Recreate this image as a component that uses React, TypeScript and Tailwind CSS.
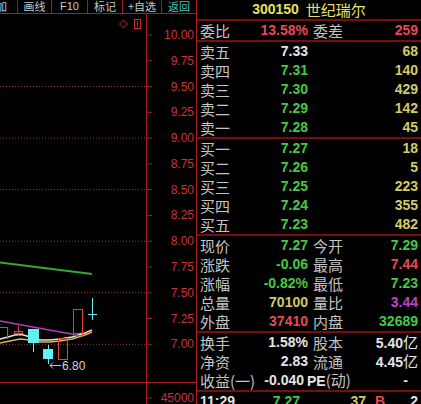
import type { ReactNode } from 'react'

const LBL = "font-['Noto_Sans_CJK_SC',sans-serif] text-[15px] leading-[19px] text-[#c4c4c4]"
const NUM = "font-['Liberation_Sans',sans-serif] text-[14px] leading-[19px] font-bold"
const GREEN = 'text-[#46c846]'
const RED = 'text-[#e8485a]'
const YEL = 'text-[#d0cc66]'
const WHITE = 'text-[#e4e4e4]'
const PURPLE = 'text-[#c040c8]'

const tools = [
  { t: '加', w: 'w-[18px] justify-start overflow-hidden', c: 'text-[#c8c8c8] -ml-[4px]' },
  { t: '画线', w: 'w-[34px] justify-center', c: 'text-[#c8c8c8]' },
  { t: 'F10', w: 'w-[36px] justify-center', c: "text-[#c8c8c8] font-['Liberation_Sans',sans-serif] text-[11px]" },
  { t: '标记', w: 'w-[35px] justify-center', c: 'text-[#c8c8c8]' },
  { t: '+自选', w: 'w-[39px] justify-center', c: 'text-[#c8c8c8]' },
  { t: '返回', w: 'flex-1 justify-center', c: 'text-[#4cc4c4]' },
]

const levels = [10, 9.75, 9.5, 9.25, 9, 8.75, 8.5, 8.25, 8, 7.75, 7.5, 7.25, 7]
const py = (p: number) => 35 + (10 - p) * 103.1

const asks = [
  ['卖五', '7.33', WHITE, '68'],
  ['卖四', '7.31', GREEN, '140'],
  ['卖三', '7.30', GREEN, '429'],
  ['卖二', '7.29', GREEN, '142'],
  ['卖一', '7.28', GREEN, '45'],
]
const bids = [
  ['买一', '7.27', GREEN, '18'],
  ['买二', '7.26', GREEN, '5'],
  ['买三', '7.25', GREEN, '223'],
  ['买四', '7.24', GREEN, '355'],
  ['买五', '7.23', GREEN, '482'],
]

function Row({ a, av, ac, b, bv, bc, extra }: {
  a: ReactNode; av: ReactNode; ac: string; b?: ReactNode; bv: ReactNode; bc: string; extra?: boolean
}) {
  return (
    <div className="grid h-[19px] grid-cols-[108px_105px] items-center gap-x-[5px] overflow-hidden pl-[3px] leading-[19px]">
      <div className="flex h-[19px] items-center justify-between">
        <span className={LBL}>{a}</span>
        <span className={`${NUM} ${ac} ${extra ? 'mr-[4px]' : ''}`}>{av}</span>
      </div>
      <div className="flex h-[19px] items-center justify-between">
        <span className={`${LBL} whitespace-nowrap ${extra ? '-ml-[6px]' : ''}`}>{b}</span>
        <span className={`${NUM} ${bc}`}>{bv}</span>
      </div>
    </div>
  )
}

const Yi = ({ v }: { v: string }) => (
  <>
    {v}
    <span className="font-['Noto_Sans_CJK_SC',sans-serif] text-[15px] font-normal">亿</span>
  </>
)

function Chart() {
  const line = '#b01c1c'
  return (
    <svg className="block" width={196} height={390} viewBox="0 14 196 390">
      {/* grid dots */}
      {[9.5, 9, 8.5, 8, 7.5, 7].map((p) => (
        <line key={p} x1={0} x2={146} y1={py(p)} y2={py(p)} stroke="#9a3c3c" strokeDasharray="1 2" />
      ))}
      <line x1={146.5} x2={146.5} y1={14} y2={404} stroke={line} />
      <line x1={0} x2={196} y1={382.5} y2={382.5} stroke={line} />
      {levels.map((p) => (
        <g key={p}>
          <line x1={147} x2={152} y1={py(p)} y2={py(p)} stroke={line} />
          <text x={194} y={py(p) + 4} textAnchor="end" fontSize={12} fill="#cc3434" fontFamily="Liberation Sans, sans-serif">
            {p.toFixed(2)}
          </text>
        </g>
      ))}
      <line x1={147} x2={152} y1={398} y2={398} stroke={line} />
      <text x={194} y={402} textAnchor="end" fontSize={12} fill="#cc3434" fontFamily="Liberation Sans, sans-serif">45000</text>

      {/* markers top */}
      <polygon points="123.5,20 127.5,24 123.5,28 119.5,24" fill="none" stroke="#d03030" />
      <rect x={134.5} y={19.5} width={6} height={9} fill="none" stroke="#d03030" />
      <line x1={137.5} x2={137.5} y1={21} y2={27} stroke="#d03030" />

      {/* moving averages */}
      <polyline points="0,262.5 92,274" fill="none" stroke="#34a834" strokeWidth={2} />
      <polyline points="0,321 30,326.5 55,331 72,334 82,333.5" fill="none" stroke="#b040b4" strokeWidth={1.5} />
      <polyline points="0,339 8,337 15,335 22,334.5 30,337 40,340 50,340 60,339 72,337 85,333 92,330" fill="none" stroke="#e6e6cc" strokeWidth={1.5} />
      <polyline points="0,343 10,341 20,339 30,340 40,342 50,342 60,341 72,339 85,335 92,332" fill="none" stroke="#d8b45c" strokeWidth={1.5} />
      <line x1={86} y1={333.5} x2={92} y2={331} stroke="#e04040" />

      {/* candles */}
      <line x1={0} x2={7} y1={327.5} y2={327.5} stroke="#e04040" />
      <line x1={7.5} x2={7.5} y1={327} y2={339} stroke="#e04040" />
      <line x1={18.5} x2={18.5} y1={326} y2={336} stroke="#e04040" />
      <rect x={14.5} y={331.5} width={8} height={2} fill="none" stroke="#e04040" />
      <line x1={33.5} x2={33.5} y1={340} y2={352} stroke="#62eef4" />
      <rect x={28} y={329} width={11} height={14} fill="#62eef4" />
      <line x1={48.5} x2={48.5} y1={345} y2={364} stroke="#62eef4" />
      <rect x={43} y={349} width={10} height={10} fill="#62eef4" />
      <rect x={58.5} y={338.5} width={9} height={21} fill="none" stroke="#e04040" />
      <rect x={73.5} y={309.5} width={9} height={26} fill="none" stroke="#e04040" />
      <line x1={92.5} x2={92.5} y1={298} y2={320} stroke="#62eef4" />
      <line x1={88} x2={97} y1={314.5} y2={314.5} stroke="#62eef4" />

      {/* low marker */}
      <path d="M61 365.5 L50 365.5 M50 365.5 l3 -3 M50 365.5 l3 3" fill="none" stroke="#c8c8c8" />
      <text x={62} y={370} fontSize={12} fill="#d4d4d4" fontFamily="Liberation Sans, sans-serif">6.80</text>
    </svg>
  )
}

export default function App() {
  const sep = 'border-b-2 border-[#7a0c0c]'
  return (
    <div className="flex h-[404px] w-[421px] overflow-hidden bg-black">
      {/* 左侧 K 线 */}
      <div className="flex w-[197px] shrink-0 flex-col border-r border-[#b01c1c]">
        <div className="flex h-[14px] shrink-0 border-b border-[#b01c1c] font-['Noto_Sans_CJK_SC',sans-serif] text-[11px] leading-[13px]">
          {tools.map((t, i) => (
            <div
              key={t.t}
              className={`flex items-center ${t.w} ${i < tools.length - 1 ? 'border-r border-[#a01c1c]' : ''}`}
            >
              <span className={`whitespace-nowrap ${t.c}`}>{t.t}</span>
            </div>
          ))}
        </div>
        <Chart />
      </div>

      {/* 右侧 盘口 */}
      <div className="flex flex-1 flex-col">
        <div className={`flex h-[21px] shrink-0 items-center justify-center gap-[7px] text-[#e6e060] ${sep}`}>
          <span className={`${NUM}`}>300150</span>
          <span className="font-['Noto_Sans_CJK_SC',sans-serif] text-[15px] leading-[19px]">世纪瑞尔</span>
        </div>
        <div className={`shrink-0 ${sep}`}>
          <Row a="委比" av="13.58%" ac={RED} b="委差" bv="259" bc={RED} />
        </div>
        <div className={`shrink-0 ${sep}`}>
          {asks.map(([a, p, c, q]) => (
            <Row key={a} a={a} av={p} ac={c} bv={q} bc={YEL} />
          ))}
        </div>
        <div className={`shrink-0 ${sep}`}>
          {bids.map(([a, p, c, q]) => (
            <Row key={a} a={a} av={p} ac={c} bv={q} bc={YEL} />
          ))}
        </div>
        <div className={`shrink-0 ${sep}`}>
          <Row a="现价" av="7.27" ac={GREEN} b="今开" bv="7.29" bc={GREEN} />
          <Row a="涨跌" av="-0.06" ac={GREEN} b="最高" bv="7.44" bc={RED} />
          <Row a="涨幅" av="-0.82%" ac={GREEN} b="最低" bv="7.23" bc={GREEN} />
          <Row a="总量" av="70100" ac={YEL} b="量比" bv="3.44" bc={PURPLE} />
          <Row a="外盘" av="37410" ac={RED} b="内盘" bv="32689" bc={GREEN} />
        </div>
        <div className={`shrink-0 ${sep}`}>
          <Row a="换手" av="1.58%" ac={WHITE} b="股本" bv={<Yi v="5.40" />} bc={WHITE} />
          <Row a="净资" av="2.83" ac={WHITE} b="流通" bv={<Yi v="4.45" />} bc={WHITE} />
          <Row
            a="收益(一)"
            av="-0.040"
            ac={WHITE}
            b={
              <>
                <span className={`${NUM} ${WHITE}`}>PE</span>(动)
              </>
            }
            bv={<span className="mr-[10px]">-</span>}
            bc={WHITE}
            extra
          />
        </div>
        <div className={`grid h-[19px] shrink-0 grid-cols-[40px_60px_66px_20px_32px] items-center pl-[3px] leading-[19px] ${NUM}`}>
          <span className={WHITE}>11:29</span>
          <span className={`text-right ${GREEN}`}>7.27</span>
          <span className={`text-right ${YEL}`}>37</span>
          <span className={`pl-[9px] ${RED}`}>B</span>
          <span className={`text-right ${WHITE}`}>2</span>
        </div>
      </div>
    </div>
  )
}
